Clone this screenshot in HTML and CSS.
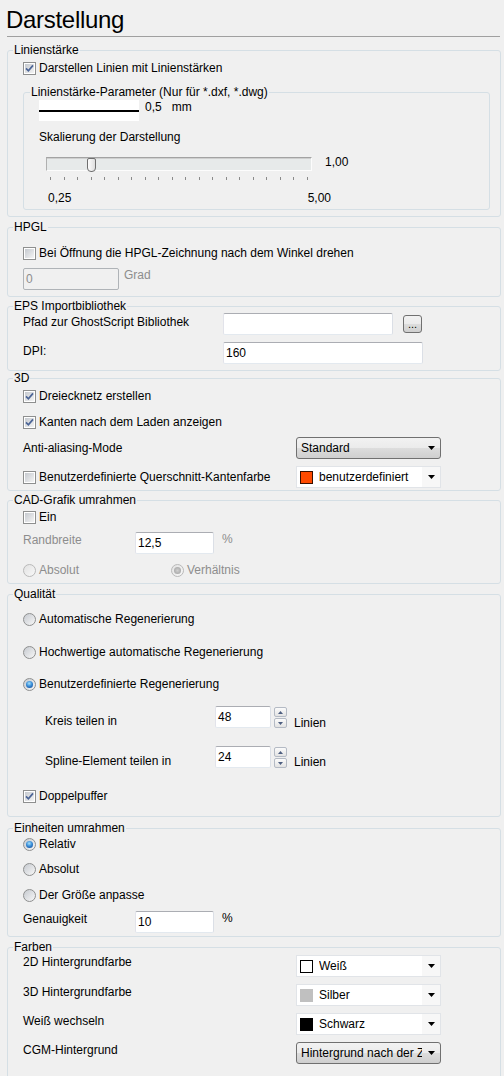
FILE: index.html
```html
<!DOCTYPE html>
<html lang="de">
<head>
<meta charset="utf-8">
<title>Darstellung</title>
<link rel="stylesheet" href="styles.css">
</head>
<body>
<div class="title">Darstellung</div>

<fieldset class="grp g1">
  <legend>Linienstärke</legend>
  <div class="body">
    <div class="opt"><span class="cb"><i><svg viewBox="0 0 9 9" width="9" height="9"><path d="M1 4.3 3.4 6.8 8 1.4" fill="none" stroke="#4b6496" stroke-width="1.7"/></svg></i></span><span class="t">Darstellen Linien mit Linienstärken</span></div>
    <fieldset class="grp inner">
      <legend>Linienstärke-Parameter (Nur für *.dxf, *.dwg)</legend>
      <div class="body">
        <div class="row mt1">
          <div class="sample"><div class="sample-line"></div></div>
          <span class="ml6">0,5</span><span class="ml10">mm</span>
        </div>
        <div class="mt9">Skalierung der Darstellung</div>
        <div class="row mt13">
          <div class="track"><div class="thumb"></div></div>
          <span class="slider-val">1,00</span>
        </div>
        <div class="ticks"><i></i><i></i><i></i><i></i><i></i><i></i><i></i><i></i><i></i><i></i><i></i><i></i><i></i><i></i><i></i><i></i><i></i><i></i><i></i><i></i></div>
        <div class="scale"><span>0,25</span><span>5,00</span></div>
      </div>
    </fieldset>
  </div>
</fieldset>

<fieldset class="grp g2">
  <legend>HPGL</legend>
  <div class="body">
    <div class="opt"><span class="cb"><i></i></span><span class="t">Bei Öffnung die HPGL-Zeichnung nach dem Winkel drehen</span></div>
    <div class="row mt8"><div class="tb dis w96">0</div><span class="dis-t ml5">Grad</span></div>
  </div>
</fieldset>

<fieldset class="grp g3">
  <legend>EPS Importbibliothek</legend>
  <div class="body">
    <div class="row"><span class="w200 mt2">Pfad zur GhostScript Bibliothek</span><div class="tb w170"></div><div class="btn">...</div></div>
    <div class="row mt7"><span class="w200 mt2">DPI:</span><div class="tb w200">160</div></div>
  </div>
</fieldset>

<fieldset class="grp g4">
  <legend>3D</legend>
  <div class="body">
    <div class="opt"><span class="cb"><i><svg viewBox="0 0 9 9" width="9" height="9"><path d="M1 4.3 3.4 6.8 8 1.4" fill="none" stroke="#4b6496" stroke-width="1.7"/></svg></i></span><span class="t">Dreiecknetz erstellen</span></div>
    <div class="opt mt12"><span class="cb"><i><svg viewBox="0 0 9 9" width="9" height="9"><path d="M1 4.3 3.4 6.8 8 1.4" fill="none" stroke="#4b6496" stroke-width="1.7"/></svg></i></span><span class="t">Kanten nach dem Laden anzeigen</span></div>
    <div class="row h22 mt8"><span class="w273 mt4">Anti-aliasing-Mode</span>
      <div class="sel"><span class="txt">Standard</span><span class="arr"><svg width="7" height="4" viewBox="0 0 7 4"><path d="M0 0h7L3.5 4z"/></svg></span></div>
    </div>
    <div class="row h22 mt7"><div class="opt w273 mt4"><span class="cb"><i></i></span><span class="t">Benutzerdefinierte Querschnitt-Kantenfarbe</span></div>
      <div class="combo"><span class="sw sw-orange"></span><span class="txt">benutzerdefiniert</span><span class="arr"><svg width="7" height="4" viewBox="0 0 7 4"><path d="M0 0h7L3.5 4z"/></svg></span></div>
    </div>
  </div>
</fieldset>

<fieldset class="grp g5">
  <legend>CAD-Grafik umrahmen</legend>
  <div class="body">
    <div class="opt"><span class="cb"><i></i></span><span class="t">Ein</span></div>
    <div class="row h22 mt8"><span class="w112 mt1 dis-t">Randbreite</span><div class="tb w79">12,5</div><span class="dis-t ml8">%</span></div>
    <div class="row mt9">
      <div class="opt w148"><span class="rb dis"></span><span class="t dis-t">Absolut</span></div>
      <div class="opt"><span class="rb dis on"></span><span class="t dis-t">Verhältnis</span></div>
    </div>
  </div>
</fieldset>

<fieldset class="grp g6">
  <legend>Qualität</legend>
  <div class="body">
    <div class="opt"><span class="rb"></span><span class="t">Automatische Regenerierung</span></div>
    <div class="opt mt19"><span class="rb"></span><span class="t">Hochwertige automatische Regenerierung</span></div>
    <div class="opt mt18"><span class="rb on"></span><span class="t">Benutzerdefinierte Regenerierung</span></div>
    <div class="row h22 mt15"><span class="w192 pl22 mt8">Kreis teilen in</span><div class="tb w56">48</div>
      <div class="spin"><b><svg width="5" height="3" viewBox="0 0 5 3"><path d="M0 3h5L2.5 0z"/></svg></b><b><svg width="5" height="3" viewBox="0 0 5 3"><path d="M0 0h5L2.5 3z"/></svg></b></div>
      <span class="ml7 mt10">Linien</span></div>
    <div class="row h22 mt18"><span class="w192 pl22 mt8">Spline-Element teilen in</span><div class="tb w56">24</div>
      <div class="spin"><b><svg width="5" height="3" viewBox="0 0 5 3"><path d="M0 3h5L2.5 0z"/></svg></b><b><svg width="5" height="3" viewBox="0 0 5 3"><path d="M0 0h5L2.5 3z"/></svg></b></div>
      <span class="ml7 mt9">Linien</span></div>
    <div class="opt mt21"><span class="cb"><i><svg viewBox="0 0 9 9" width="9" height="9"><path d="M1 4.3 3.4 6.8 8 1.4" fill="none" stroke="#4b6496" stroke-width="1.7"/></svg></i></span><span class="t">Doppelpuffer</span></div>
  </div>
</fieldset>

<fieldset class="grp g7">
  <legend>Einheiten umrahmen</legend>
  <div class="body">
    <div class="opt"><span class="rb on"></span><span class="t">Relativ</span></div>
    <div class="opt mt11"><span class="rb"></span><span class="t">Absolut</span></div>
    <div class="opt mt12"><span class="rb"></span><span class="t">Der Größe anpasse</span></div>
    <div class="row h22 mt9"><span class="w112 mt1">Genauigkeit</span><div class="tb w79">10</div><span class="ml8">%</span></div>
  </div>
</fieldset>

<fieldset class="grp g8">
  <legend>Farben</legend>
  <div class="body">
    <div class="row h22"><span class="w273">2D Hintergrundfarbe</span>
      <div class="combo"><span class="sw sw-white"></span><span class="txt">Weiß</span><span class="arr"><svg width="7" height="4" viewBox="0 0 7 4"><path d="M0 0h7L3.5 4z"/></svg></span></div></div>
    <div class="row h22 mt7"><span class="w273 mt1">3D Hintergrundfarbe</span>
      <div class="combo"><span class="sw sw-silver"></span><span class="txt">Silber</span><span class="arr"><svg width="7" height="4" viewBox="0 0 7 4"><path d="M0 0h7L3.5 4z"/></svg></span></div></div>
    <div class="row h22 mt7"><span class="w273 mt1">Weiß wechseln</span>
      <div class="combo"><span class="sw sw-black"></span><span class="txt">Schwarz</span><span class="arr"><svg width="7" height="4" viewBox="0 0 7 4"><path d="M0 0h7L3.5 4z"/></svg></span></div></div>
    <div class="row h22 mt7"><span class="w273 mt1">CGM-Hintergrund</span>
      <div class="sel"><span class="txt">Hintergrund nach der Zeichnung</span><span class="arr"><svg width="7" height="4" viewBox="0 0 7 4"><path d="M0 0h7L3.5 4z"/></svg></span></div></div>
  </div>
</fieldset>
</body>
</html>
```

FILE: styles.css
```css
* { box-sizing: border-box; }
html, body { margin: 0; padding: 0; }
body {
  width: 504px;
  height: 1076px;
  overflow: hidden;
  background: #f0f0f0;
  color: #000;
  font-family: "Liberation Sans", Arial, sans-serif;
  font-size: 12px;
  line-height: 14px;
}

.title {
  margin: 0 4px 0 7px;
  padding-top: 6px;
  height: 37px;
  border-bottom: 1px solid #a0a0a0;
  font-size: 24px;
  line-height: 28px;
  letter-spacing: -0.3px;
  text-indent: -1px;
}

/* group boxes */
.grp {
  margin: 3px 3px 0 7px;
  padding: 0;
  border: 1px solid #d5dfe5;
  border-radius: 3px;
  min-width: 0;
}
.grp > legend { padding: 0 1px; margin-left: 5px; line-height: 14px; }
.body { padding: 0 0 6px 15px; }

.g1 { margin-top: 6px; }
.g1 > .body { padding-top: 4px; padding-bottom: 6px; }
.inner { margin: 10px 10px 0 0; }
.inner > legend { margin-left: 6px; }
.inner > .body { padding: 0 0 4px 15px; }
.g2 { margin-top: 3px; }
.g2 > .body { padding-top: 12px; padding-bottom: 6px; }
.g3 { margin-top: 2px; }
.g3 > .body { padding-top: 0; padding-bottom: 6px; }
.g4 { margin-top: 0; }
.g4 > .body { padding-top: 4px; padding-bottom: 2px; }
.g5 { margin-top: 2px; }
.g5 > .body { padding-top: 3px; padding-bottom: 6px; }
.g6 { margin-top: 3px; }
.g6 > .body { padding-top: 11px; padding-bottom: 13px; }
.g7 { margin-top: 4px; }
.g7 > .body { padding-top: 2px; padding-bottom: 3px; }
.g8 { margin-top: 3px; }
.g8 > .body { padding-top: 1px; padding-bottom: 20px; }

/* layout helpers */
.row { display: flex; align-items: flex-start; white-space: nowrap; }
.h22 { height: 22px; }
.opt { display: flex; align-items: center; height: 14px; white-space: nowrap; flex: none; }
.opt .t { margin-left: 3px; }
.mt1 { margin-top: 1px; } .mt2 { margin-top: 2px; } .mt4 { margin-top: 4px; }
.mt7 { margin-top: 7px; } .mt8 { margin-top: 8px; } .mt9 { margin-top: 9px; }
.mt10 { margin-top: 10px; } .mt11 { margin-top: 11px; } .mt12 { margin-top: 12px; }
.mt13 { margin-top: 13px; } .mt15 { margin-top: 15px; } .mt18 { margin-top: 18px; }
.mt19 { margin-top: 19px; } .mt21 { margin-top: 21px; }
.ml5 { margin-left: 5px; } .ml6 { margin-left: 6px; } .ml7 { margin-left: 7px; }
.ml8 { margin-left: 8px; } .ml10 { margin-left: 10px; }
.pl22 { padding-left: 22px; }
.w56 { width: 56px; flex: none; } .w79 { width: 79px; flex: none; }
.w96 { width: 96px; flex: none; } .w112 { width: 112px; flex: none; }
.w148 { width: 148px; flex: none; } .w170 { width: 170px; flex: none; }
.w192 { width: 192px; flex: none; } .w200 { width: 200px; flex: none; }
.w273 { width: 273px; flex: none; }
.dis-t { color: #8d8d8d; }

/* checkbox */
.cb {
  flex: none;
  width: 13px; height: 13px;
  border: 1px solid #8e8f8f;
  padding: 1px;
  background: #fff;
}
.cb i {
  display: block;
  width: 9px; height: 9px;
  background: linear-gradient(135deg, #c5c9cf, #f4f4f4);
}
.cb svg { display: block; }

/* radio */
.rb {
  flex: none;
  width: 13px; height: 13px;
  border-radius: 50%;
  border: 1px solid #8e8f8f;
  background: linear-gradient(135deg, #c6cad0, #f7f7f7);
  display: flex; align-items: center; justify-content: center;
}
.rb.on::after {
  content: "";
  width: 7px; height: 7px;
  border-radius: 50%;
  background: radial-gradient(circle at 45% 35%, #a8e2fb 0, #3b8fd9 45%, #0b3b89 100%);
}
.rb.dis { border-color: #b9b9b9; background: linear-gradient(135deg, #e2e2e2, #f8f8f8); }
.rb.dis.on::after { background: radial-gradient(circle, #d0d0d0 0, #9c9c9c 100%); }

/* text boxes */
.tb {
  flex: none;
  height: 22px;
  border: 1px solid;
  border-color: #abadb3 #dbdfe6 #e3e9ef #e2e3ea;
  border-radius: 2px;
  background: #fff;
  padding: 3px 2px;
  line-height: 14px;
}
.tb.dis { background: #f0f0f0; border-color: #afb3b7; color: #8d8d8d; }

.btn {
  flex: none;
  width: 19px; height: 18px;
  margin: 2px 0 0 10px;
  border: 1px solid #707070;
  border-radius: 3px;
  background: linear-gradient(#f2f2f2, #ebebeb 50%, #dddddd 50%, #cfcfcf);
  text-align: center;
  line-height: 16px;
  font-size: 11px;
}

/* line sample */
.sample {
  flex: none;
  width: 100px; height: 21px;
  background: #fff;
  display: flex; align-items: center;
}
.sample-line { width: 100%; height: 2px; background: #000; }

/* slider */
.track {
  position: relative;
  flex: none;
  width: 266px; height: 14px;
  margin-left: 7px;
  border: 1px solid;
  border-color: #a3a3a3 #fcfcfc #fcfcfc #b0b0b0;
  box-shadow: inset 0 1px #cfcfcf;
  background: #e7eaea;
}
.thumb {
  position: absolute;
  left: 40px; top: 0;
  width: 9px; height: 14px;
  border: 1px solid #6f6f6f;
  border-radius: 2px 2px 4px 4px;
  background: linear-gradient(90deg, #fdfdfd, #dedede);
}
.slider-val { margin: -2px 0 0 13px; }
.ticks {
  display: flex; justify-content: space-between;
  width: 258px; height: 3px;
  margin: 6px 0 0 11px;
}
.ticks i { display: block; width: 1px; height: 3px; background: #8a8a8a; }
.scale {
  display: flex; justify-content: space-between;
  width: 283px;
  margin: 11px 0 0 9px;
}

/* combos */
.combo {
  flex: none;
  width: 145px; height: 22px;
  display: flex; align-items: center;
  border: 1px solid #e1e4e8;
  background: #fff;
}
.combo .txt { flex: 1; margin-left: 6px; overflow: hidden; }
.combo .arr, .sel .arr {
  flex: none;
  width: 18px; height: 20px;
  display: flex; align-items: center; justify-content: center;
}
.combo .arr { background: #f7f7f7; }
.sw { flex: none; width: 13px; height: 13px; margin-left: 3px; border: 1px solid #000; }
.sw-orange { background: #ff4a00; border-color: #3a1000; }
.sw-white { background: #fff; }
.sw-silver { background: #c0c0c0; border-color: #c0c0c0; }
.sw-black { background: #000; }

.sel {
  flex: none;
  width: 145px; height: 22px;
  display: flex; align-items: center;
  border: 1px solid #707070;
  border-radius: 3px;
  background: linear-gradient(#f2f2f2, #ebebeb 50%, #dddddd 50%, #cfcfcf);
  padding-left: 4px;
  overflow: hidden;
}
.sel .txt { flex: 1; overflow: hidden; white-space: nowrap; }

/* spinner */
.spin {
  flex: none;
  width: 13px;
  margin: 1px 0 0 3px;
  display: flex; flex-direction: column; gap: 1px;
}
.spin b {
  display: flex; align-items: center; justify-content: center;
  height: 10px;
  border: 1px solid #b4bac4;
  border-radius: 2px;
  background: linear-gradient(#fbfbfb, #e3e3e3);
}
.spin svg { fill: #4d5e80; display: block; }
```
